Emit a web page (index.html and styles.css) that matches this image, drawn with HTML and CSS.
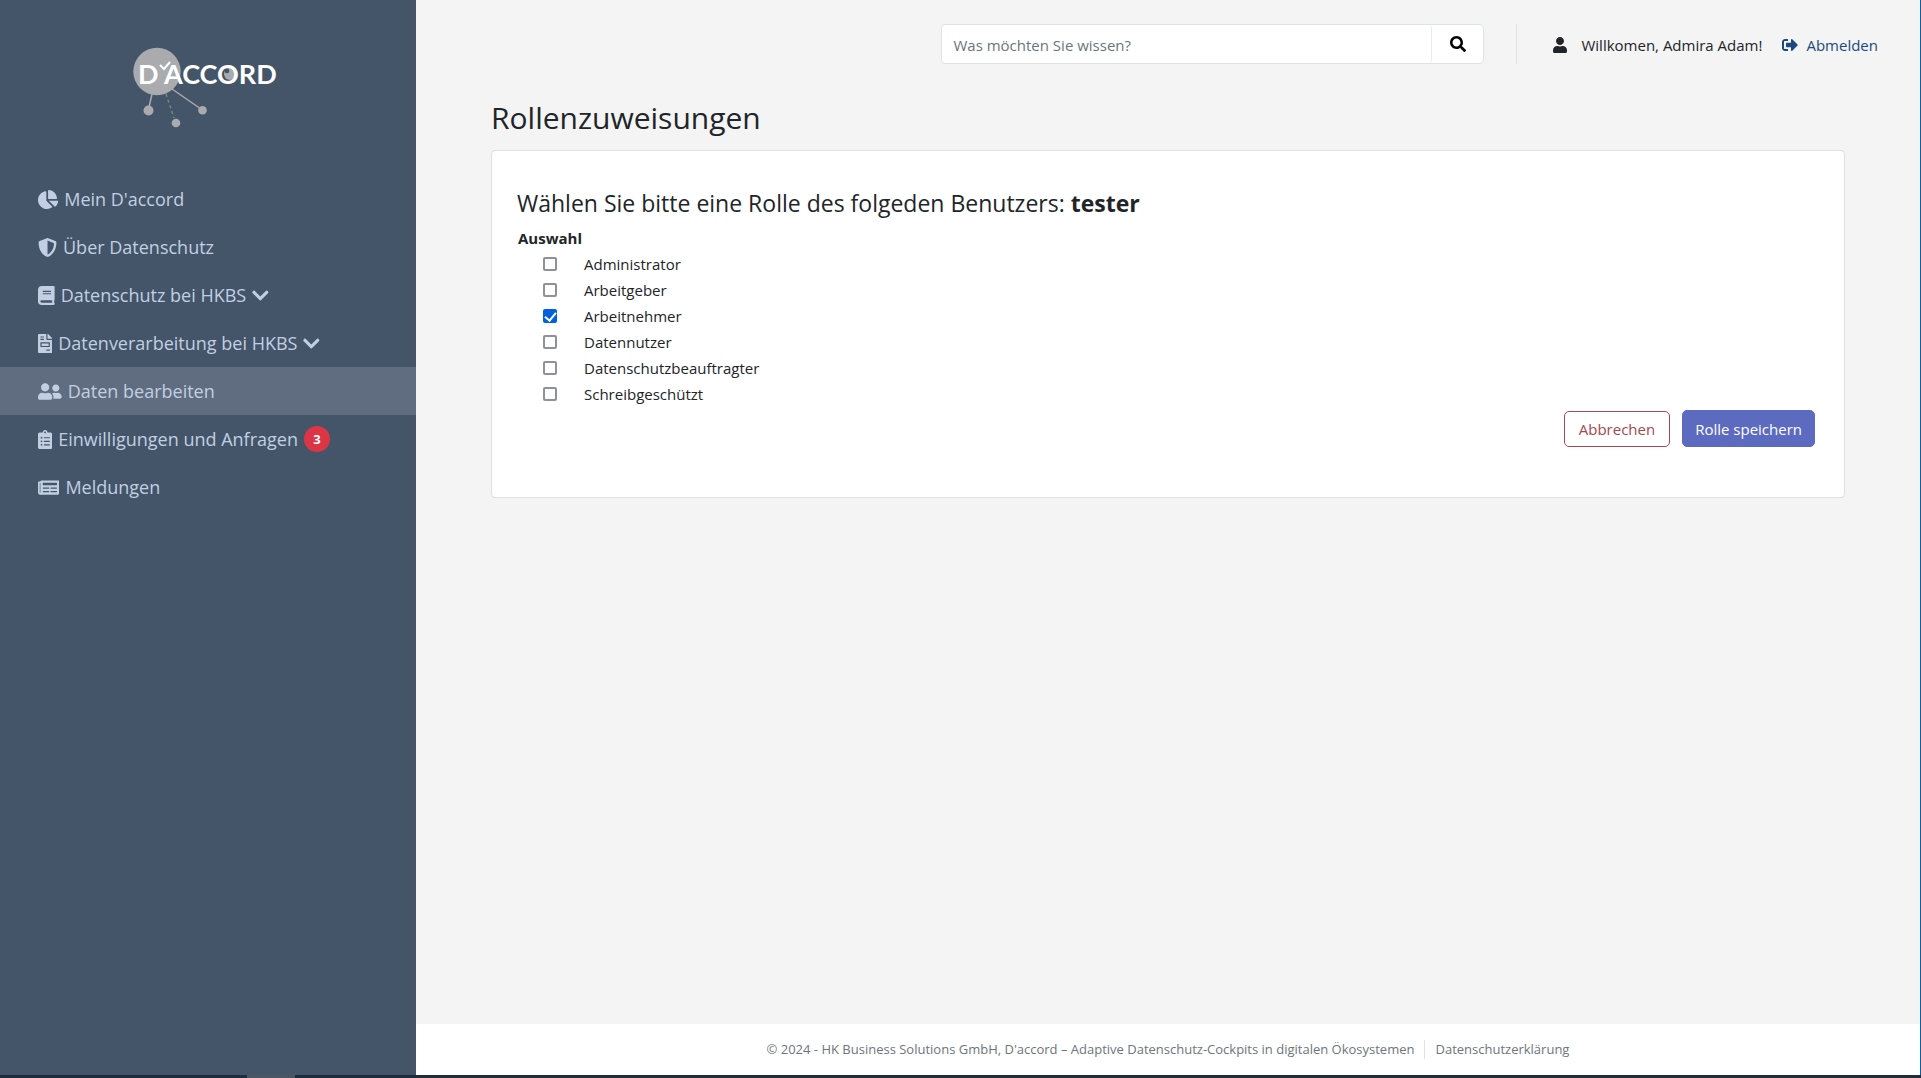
FILE: index.html
```html
<!DOCTYPE html>
<html lang="de">
<head>
<meta charset="utf-8">
<meta name="viewport" content="width=device-width, initial-scale=1">
<title>D'accord – Rollenzuweisungen</title>
<link rel="stylesheet" href="styles.css">
</head>
<body>
<div class="app">
  <aside class="sidebar">
    <a class="brand" href="#" aria-label="D'accord">
      <svg class="logo" viewBox="23 16 150 84" width="150" height="84">
        <g stroke="#a9abae" stroke-width="1.5">
          <path d="M42 64 39 77M62 59l29 20"/>
          <path d="M56 64l8 24" stroke="#6f8c78" stroke-dasharray="3 3"/>
        </g>
        <g fill="#a9abae">
          <circle cx="47" cy="41.500" r="23.700"/>
          <circle cx="38.500" cy="80.500" r="5"/>
          <circle cx="66" cy="93" r="4.300"/>
          <circle cx="92.500" cy="80.300" r="4.300"/>
          <circle cx="120" cy="44" r="6"/>
        </g>
        <circle cx="117" cy="41" r="2.300" fill="#445569"/>
        <text class="logo-text" x="28" y="54">D</text>
        <text class="logo-text" x="54" y="54">ACCORD</text>
        <path d="M50 35l4 4 6-7" fill="none" stroke="#fff" stroke-width="2"/>
      </svg>
    </a>
    <nav class="nav">
      <a class="nav-item" href="#"><svg class="icon" viewBox="0 0 544 512"><path d="M527.79 288H290.5l158.03 158.03c6.04 6.04 15.98 6.53 22.19.68 38.7-36.46 65.32-85.61 73.13-140.86 1.34-9.46-6.51-17.85-16.06-17.85zm-15.83-64.8C503.72 103.74 408.26 8.28 288.8.04 279.68-.59 272 7.1 272 16.24V240h223.77c9.14 0 16.82-7.68 16.19-16.8zM224 288V50.71c0-9.55-8.39-17.4-17.84-16.06C86.99 51.49-4.1 155.6.14 280.37 4.5 408.51 114.83 513.59 243.03 511.98c50.4-.63 96.97-16.87 135.26-44.03 7.9-5.6 8.42-17.23 1.57-24.08L224 288z"/></svg><span>Mein D'accord</span></a>
      <a class="nav-item" href="#"><svg class="icon" viewBox="0 0 512 512"><path d="M466.5 83.700l-192-80a48.150 48.150 0 0 0-36.900 0l-192 80C27.700 91.100 16 108.600 16 128c0 198.500 114.500 335.700 221.500 380.300 11.800 4.900 25.100 4.900 36.900 0C360.100 472.600 496 349.300 496 128c0-19.400-11.700-36.900-29.500-44.300zM256.100 446.300l-.1-381 175.900 73.300c-3.300 151.400-82.100 261.100-175.800 307.700z"/></svg><span>Über Datenschutz</span></a>
      <a class="nav-item" href="#"><svg class="icon" viewBox="0 0 448 512"><path d="M448 360V24c0-13.300-10.700-24-24-24H96C43 0 0 43 0 96v320c0 53 43 96 96 96h328c13.300 0 24-10.700 24-24v-16c0-7.500-3.500-14.300-8.900-18.700-4.200-15.400-4.200-59.300 0-74.700 5.400-4.300 8.900-11.100 8.900-18.600zM128 134c0-3.300 2.700-6 6-6h212c3.300 0 6 2.700 6 6v20c0 3.300-2.700 6-6 6H134c-3.300 0-6-2.700-6-6v-20zm0 64c0-3.300 2.700-6 6-6h212c3.300 0 6 2.700 6 6v20c0 3.300-2.700 6-6 6H134c-3.300 0-6-2.700-6-6v-20zm253.400 250H96c-17.700 0-32-14.300-32-32 0-17.600 14.400-32 32-32h285.400c-1.900 17.100-1.900 46.900 0 64z"/></svg><span>Datenschutz bei HKBS</span><svg class="icon" viewBox="0 0 448 512"><path d="M207.029 381.476L12.686 187.132c-9.373-9.373-9.373-24.569 0-33.941l22.667-22.667c9.357-9.357 24.522-9.375 33.901-.04L224 284.505l154.745-154.021c9.379-9.335 24.544-9.317 33.901.04l22.667 22.667c9.373 9.373 9.373 24.569 0 33.941L240.971 381.476c-9.373 9.372-24.569 9.372-33.942 0z"/></svg></a>
      <a class="nav-item" href="#"><svg class="icon" viewBox="0 0 384 512"><path d="M288 256H96v64h192v-64zm89-151L279.100 7c-4.500-4.500-10.600-7-17-7H256v128h128v-6.100c0-6.300-2.500-12.400-7-16.900zm-153 31V0H24C10.700 0 0 10.700 0 24v464c0 13.300 10.700 24 24 24h336c13.300 0 24-10.700 24-24V160H248c-13.200 0-24-10.800-24-24zM64 72c0-4.420 3.580-8 8-8h80c4.420 0 8 3.580 8 8v16c0 4.420-3.580 8-8 8H72c-4.420 0-8-3.580-8-8V72zm0 64c0-4.420 3.580-8 8-8h80c4.420 0 8 3.580 8 8v16c0 4.420-3.580 8-8 8H72c-4.420 0-8-3.580-8-8v-16zm256 304c0 4.420-3.580 8-8 8h-80c-4.420 0-8-3.580-8-8v-16c0-4.420 3.580-8 8-8h80c4.420 0 8 3.580 8 8v16zm0-200v96c0 8.840-7.160 16-16 16H80c-8.840 0-16-7.160-16-16v-96c0-8.840 7.160-16 16-16h224c8.840 0 16 7.160 16 16z"/></svg><span>Datenverarbeitung bei HKBS</span><svg class="icon" viewBox="0 0 448 512"><path d="M207.029 381.476L12.686 187.132c-9.373-9.373-9.373-24.569 0-33.941l22.667-22.667c9.357-9.357 24.522-9.375 33.901-.04L224 284.505l154.745-154.021c9.379-9.335 24.544-9.317 33.901.04l22.667 22.667c9.373 9.373 9.373 24.569 0 33.941L240.971 381.476c-9.373 9.372-24.569 9.372-33.942 0z"/></svg></a>
      <a class="nav-item nav-item-active" href="#" aria-current="page"><svg class="icon" viewBox="0 0 640 512"><path d="M192 256c61.900 0 112-50.100 112-112S253.900 32 192 32 80 82.100 80 144s50.100 112 112 112zm76.800 32h-8.300c-20.800 10-43.900 16-68.500 16s-47.600-6-68.500-16h-8.300C51.600 288 0 339.600 0 403.200V432c0 26.500 21.500 48 48 48h288c26.500 0 48-21.500 48-48v-28.800c0-63.600-51.600-115.200-115.200-115.200zM480 256c53 0 96-43 96-96s-43-96-96-96-96 43-96 96 43 96 96 96zm48 32h-3.800c-13.900 4.800-28.600 8-44.200 8s-30.300-3.200-44.200-8H432c-20.400 0-39.200 5.900-55.700 15.400 24.400 26.300 39.700 61.200 39.700 99.800v38.400c0 2.200-.5 4.300-.6 6.400H592c26.500 0 48-21.500 48-48 0-61.900-50.100-112-112-112z"/></svg><span>Daten bearbeiten</span></a>
      <a class="nav-item" href="#"><svg class="icon" viewBox="0 0 384 512"><path d="M336 64h-80c0-35.300-28.700-64-64-64s-64 28.700-64 64H48C21.500 64 0 85.500 0 112v352c0 26.500 21.500 48 48 48h288c26.500 0 48-21.500 48-48V112c0-26.500-21.500-48-48-48zM96 424c-13.300 0-24-10.700-24-24s10.700-24 24-24 24 10.700 24 24-10.700 24-24 24zm0-96c-13.300 0-24-10.700-24-24s10.700-24 24-24 24 10.700 24 24-10.700 24-24 24zm0-96c-13.300 0-24-10.700-24-24s10.700-24 24-24 24 10.700 24 24-10.700 24-24 24zm96-192c13.300 0 24 10.700 24 24s-10.700 24-24 24-24-10.700-24-24 10.700-24 24-24zm128 368c0 4.400-3.600 8-8 8H168c-4.400 0-8-3.600-8-8v-16c0-4.400 3.600-8 8-8h144c4.400 0 8 3.600 8 8v16zm0-96c0 4.400-3.600 8-8 8H168c-4.400 0-8-3.600-8-8v-16c0-4.400 3.600-8 8-8h144c4.400 0 8 3.600 8 8v16zm0-96c0 4.400-3.600 8-8 8H168c-4.400 0-8-3.600-8-8v-16c0-4.400 3.600-8 8-8h144c4.400 0 8 3.600 8 8v16z"/></svg><span>Einwilligungen und Anfragen</span><span class="badge">3</span></a>
      <a class="nav-item" href="#"><svg class="icon" viewBox="0 0 576 512"><path d="M552 64H88c-13.255 0-24 10.745-24 24v8H24c-13.255 0-24 10.745-24 24v272c0 30.928 25.072 56 56 56h472c26.510 0 48-21.490 48-48V88c0-13.255-10.745-24-24-24zM56 400a8 8 0 0 1-8-8V144h16v248a8 8 0 0 1-8 8zm236-16H140c-6.627 0-12-5.373-12-12v-8c0-6.627 5.373-12 12-12h152c6.627 0 12 5.373 12 12v8c0 6.627-5.373 12-12 12zm208 0H348c-6.627 0-12-5.373-12-12v-8c0-6.627 5.373-12 12-12h152c6.627 0 12 5.373 12 12v8c0 6.627-5.373 12-12 12zm-208-96H140c-6.627 0-12-5.373-12-12v-8c0-6.627 5.373-12 12-12h152c6.627 0 12 5.373 12 12v8c0 6.627-5.373 12-12 12zm208 0H348c-6.627 0-12-5.373-12-12v-8c0-6.627 5.373-12 12-12h152c6.627 0 12 5.373 12 12v8c0 6.627-5.373 12-12 12zm0-96H140c-6.627 0-12-5.373-12-12v-40c0-6.627 5.373-12 12-12h360c6.627 0 12 5.373 12 12v40c0 6.627-5.373 12-12 12z"/></svg><span>Meldungen</span></a>
    </nav>
  </aside>

  <div class="page">
    <header class="topbar">
      <form class="search" role="search">
        <input class="search-input" type="search" placeholder="Was möchten Sie wissen?" aria-label="Suche">
        <button class="search-button" type="button" aria-label="Suchen"><svg class="icon-small" viewBox="0 0 512 512"><path d="M505 442.700L405.300 343c-4.500-4.500-10.600-7-17-7H372c27.600-35.300 44-79.700 44-128C416 93.100 322.900 0 208 0S0 93.100 0 208s93.100 208 208 208c48.300 0 92.700-16.400 128-44v16.300c0 6.400 2.500 12.500 7 17l99.700 99.700c9.400 9.400 24.600 9.400 33.900 0l28.300-28.300c9.400-9.400 9.400-24.600.1-34zM208 336c-70.700 0-128-57.200-128-128 0-70.700 57.200-128 128-128 70.700 0 128 57.200 128 128 0 70.700-57.200 128-128 128z"/></svg></button>
      </form>
      <div class="account">
        <svg class="icon-small" viewBox="0 0 448 512"><path d="M224 256c70.700 0 128-57.300 128-128S294.700 0 224 0 96 57.300 96 128s57.300 128 128 128zm89.600 32h-16.700c-22.200 10.200-46.900 16-72.900 16s-50.600-5.800-72.900-16h-16.700C60.200 288 0 348.200 0 422.400V464c0 26.500 21.500 48 48 48h352c26.500 0 48-21.500 48-48v-41.600c0-74.200-60.200-134.400-134.400-134.400z"/></svg>
        <span class="welcome">Willkomen, Admira Adam!</span>
        <a class="logout" href="#"><svg class="icon-small" viewBox="0 0 512 512"><path d="M497 273L329 441c-15 15-41 4.500-41-17v-96H152c-13.300 0-24-10.700-24-24v-96c0-13.300 10.700-24 24-24h136V88c0-21.400 25.900-32 41-17l168 168c9.300 9.400 9.300 24.600 0 34zM192 436v-40c0-6.600-5.400-12-12-12H96c-17.700 0-32-14.300-32-32V160c0-17.700 14.300-32 32-32h84c6.600 0 12-5.400 12-12V76c0-6.600-5.400-12-12-12H96c-53 0-96 43-96 96v192c0 53 43 96 96 96h84c6.600 0 12-5.400 12-12z"/></svg><span>Abmelden</span></a>
      </div>
    </header>

    <main class="content">
      <h1 class="title">Rollenzuweisungen</h1>
      <form class="card">
        <h2 class="subtitle">Wählen Sie bitte eine Rolle des folgeden Benutzers: <strong>tester</strong></h2>
        <fieldset class="roles">
          <legend class="roles-title">Auswahl</legend>
          <label class="role"><input class="check" type="checkbox"><span>Administrator</span></label>
          <label class="role"><input class="check" type="checkbox"><span>Arbeitgeber</span></label>
          <label class="role"><input class="check" type="checkbox" checked><span>Arbeitnehmer</span></label>
          <label class="role"><input class="check" type="checkbox"><span>Datennutzer</span></label>
          <label class="role"><input class="check" type="checkbox"><span>Datenschutzbeauftragter</span></label>
          <label class="role"><input class="check" type="checkbox"><span>Schreibgeschützt</span></label>
        </fieldset>
        <div class="actions">
          <button class="button button-cancel" type="button">Abbrechen</button>
          <button class="button button-save" type="button">Rolle speichern</button>
        </div>
      </form>
    </main>

    <footer class="footer">
      <span>© 2024 - HK Business Solutions GmbH, D'accord – Adaptive Datenschutz-Cockpits in digitalen Ökosystemen</span>
      <a class="footer-link" href="#">Datenschutzerklärung</a>
    </footer>
  </div>
</div>
<div class="taskbar"><div class="taskbar-item"></div></div>
</body>
</html>
```
FILE: styles.css
```css
* {
  box-sizing: border-box;
}

body {
  margin: 0;
  min-height: 100vh;
  display: flex;
  flex-direction: column;
  background: #f4f4f4;
  color: #212529;
  font-family: "Open Sans", "Noto Sans", sans-serif;
  font-size: 15px;
  line-height: 26px;
}

a {
  color: inherit;
  text-decoration: none;
}

button,
input {
  font: inherit;
}

svg {
  display: block;
  flex: none;
}

.app {
  flex: 1;
  display: flex;
  border-right: 1px solid #0063b1;
}

/* Sidebar */
.sidebar {
  flex: none;
  width: 416px;
  background: #445569;
  color: #c2cfe2;
}

.brand {
  display: flex;
  justify-content: center;
  padding: 46px 0 45px;
}

.logo-text {
  fill: #fff;
  font-family: Lato, sans-serif;
  font-size: 27px;
  font-weight: 700;
}

.nav {
  display: flex;
  flex-direction: column;
}

.nav-item {
  display: flex;
  align-items: center;
  gap: 6px;
  height: 48px;
  padding: 0 38px;
  font-size: 18px;
  white-space: nowrap;
}

.nav-item-active {
  background: #606d80;
}

.icon {
  height: 19px;
  fill: currentColor;
}

.icon-small {
  height: 16px;
  fill: currentColor;
}

.badge {
  width: 26px;
  height: 26px;
  border-radius: 50%;
  background: #dc3545;
  color: #fff;
  font-size: 13px;
  font-weight: 700;
  text-align: center;
}

/* Page */
.page {
  flex: 1;
  min-width: 0;
  display: flex;
  flex-direction: column;
}

.topbar {
  display: flex;
  justify-content: flex-end;
  gap: 32px;
  padding: 24px 42px 0 24px;
}

.search {
  display: flex;
  width: 543px;
  height: 40px;
  background: #fff;
  border: 1px solid #dee2e6;
  border-radius: 4px;
}

.search-input {
  flex: 1;
  min-width: 0;
  padding: 1px 11px 0;
  border: 0;
  border-right: 1px solid #e9ecef;
  border-radius: 4px;
  background: transparent;
  outline: 0;
}

.search-input::placeholder {
  color: #6c757d;
  opacity: 1;
}

.search-button {
  display: flex;
  align-items: center;
  justify-content: center;
  width: 51px;
  padding: 0;
  border: 0;
  background: transparent;
  color: #000;
}

.account {
  display: flex;
  align-items: center;
  gap: 14px;
  padding: 2px 0 0 36px;
  border-left: 1px solid #dee2e6;
  white-space: nowrap;
}

.logout {
  display: flex;
  align-items: center;
  gap: 8px;
  margin-left: 6px;
  color: #1c4a7e;
}

.content {
  flex: 1;
  padding: 32px 75px;
}

.title {
  margin: 0 0 10px;
  font-size: 30px;
  font-weight: 400;
  line-height: 44px;
}

.card {
  padding: 36px 29px 50px 25px;
  border: 1px solid #dfdfdf;
  border-radius: 4px;
  background: #fff;
}

.subtitle {
  margin: 0 0 6px;
  font-size: 23px;
  font-weight: 400;
  line-height: 32px;
}

.roles {
  margin: 0;
  padding: 0;
  border: 0;
}

.roles-title {
  padding: 0 1px;
  font-weight: 700;
}

.role {
  display: flex;
  align-items: center;
  gap: 27px;
  width: max-content;
  padding-left: 26px;
}

.check {
  appearance: none;
  display: flex;
  align-items: center;
  justify-content: center;
  width: 14px;
  height: 14px;
  margin: 0;
  border: 2px solid #8f8f9d;
  border-radius: 2px;
  background: #fff;
}

.check:checked {
  border-color: #0060df;
  background: #0060df;
}

.check:checked::before {
  content: "";
  flex: none;
  width: 5px;
  height: 9px;
  border: solid #fff;
  border-width: 0 2px 2px 0;
  transform: translateY(-1px) rotate(40deg);
}

.actions {
  display: flex;
  justify-content: flex-end;
  align-items: flex-end;
  gap: 12px;
  padding-top: 3px;
}

.button {
  padding: 0 12px;
  border: 1px solid;
  border-radius: 5px;
}

.button-cancel {
  height: 36px;
  padding: 0 14px;
  border-color: #a5484f;
  background: #fff;
  color: #a5484f;
}

.button-save {
  height: 37px;
  border-color: #5c6bc0;
  background: #5c6bc0;
  color: #fff;
}

.footer {
  display: flex;
  align-items: center;
  justify-content: center;
  gap: 10px;
  padding: 16px 10px;
  background: #fff;
  color: #6c757d;
  font-size: 13px;
  line-height: 19px;
}

.footer-link {
  padding-left: 10px;
  border-left: 1px solid #dee2e6;
}

.taskbar {
  height: 3px;
  padding-left: 247px;
  background: #1f2c3a;
}

.taskbar-item {
  width: 48px;
  height: 3px;
  background: #4c5661;
}
```
